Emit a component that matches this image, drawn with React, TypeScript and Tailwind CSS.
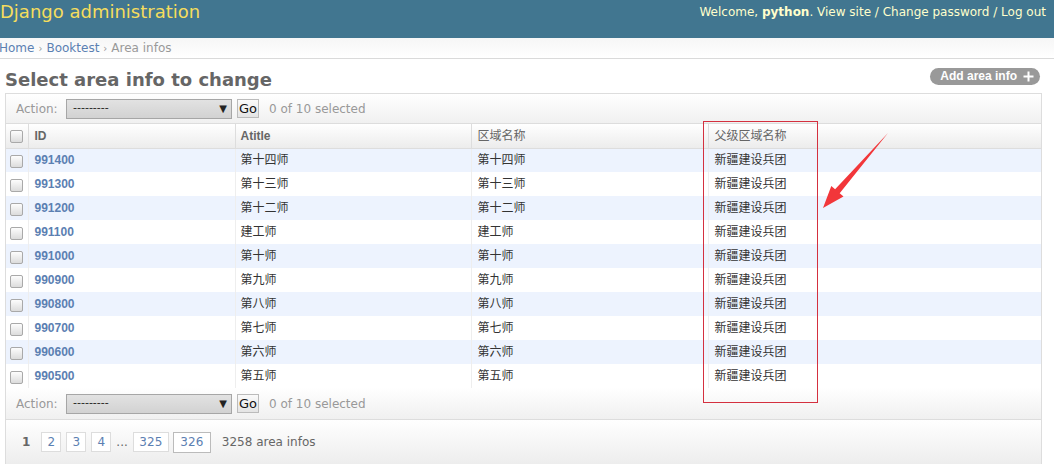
import React from 'react'

const ROWS = [
  ['991400', '第十四师', '第十四师'],
  ['991300', '第十三师', '第十三师'],
  ['991200', '第十二师', '第十二师'],
  ['991100', '建工师', '建工师'],
  ['991000', '第十师', '第十师'],
  ['990900', '第九师', '第九师'],
  ['990800', '第八师', '第八师'],
  ['990700', '第七师', '第七师'],
  ['990600', '第六师', '第六师'],
  ['990500', '第五师', '第五师'],
]

const dejavu = "font-['DejaVu_Sans','Noto_Sans_CJK_SC',sans-serif]"
const arial = "font-['Liberation_Sans','Noto_Sans_CJK_SC',sans-serif]"

function Checkbox() {
  return (
    <span className="inline-block w-[13px] h-[13px] rounded-[2px] border border-[#a9a9a9] bg-gradient-to-b from-[#fdfdfd] to-[#dcdcdc]" />
  )
}

function ActionBar({ top }: { top?: boolean }) {
  return (
    <div
      className={`flex items-center pl-[10px] text-[12px] text-[#999] bg-gradient-to-b from-[#ffffff] to-[#f0f0f0] border-b border-[#ddd] ${
        top ? 'h-[30px]' : 'h-[32px]'
      }`}
    >
      <span className="w-[50px]">Action:</span>
      <div className="flex items-center justify-between w-[166px] h-[20px] border border-[#a6a6a6] bg-gradient-to-b from-[#e2e2e2] to-[#d2d2d2] pl-[6px] pr-[4px] text-[#222] text-[11px]">
        <span>---------</span>
        <span className="text-[10px]">▼</span>
      </div>
      <div className="ml-[5px] h-[19px] w-[22px] flex items-center justify-center border border-[#bbb] bg-gradient-to-b from-[#fafafa] to-[#e4e4e4] text-[#111] text-[13px]">
        Go
      </div>
      <span className="ml-[10px]">0 of 10 selected</span>
    </div>
  )
}

export default function App() {
  return (
    <div className={`relative w-[1054px] h-[464px] overflow-hidden bg-white ${dejavu}`}>
      {/* Header */}
      <div className="flex items-center justify-between h-[38px] bg-[#417690] pr-[8px]">
        <div className="text-[18px] text-[#f5dd5d] leading-none -mt-[14px]">Django administration</div>
        <div className="text-[12px] text-[#ffffcc] -mt-[14px]">
          Welcome, <b>python</b>. View site / Change password / Log out
        </div>
      </div>

      {/* Breadcrumbs */}
      <div className="h-[21px] flex items-center text-[12px] text-[#999] bg-gradient-to-b from-[#f6f6f6] to-white border-b border-[#dadada] -ml-[1px]">
        <span className="text-[#5b80b2]">Home</span>
        <span className="mx-[4px] text-[10px]">›</span>
        <span className="text-[#5b80b2]">Booktest</span>
        <span className="mx-[4px] text-[10px]">›</span>
        <span>Area infos</span>
      </div>

      {/* Content */}
      <div className="pl-[5px] pr-[12px]">
        <div className="flex items-center justify-between h-[34px] pt-[6px]">
          <h1 className="text-[18px] font-bold text-[#666]">Select area info to change</h1>
          <div className={`flex items-center gap-[6px] h-[17px] rounded-full bg-[#999] pl-[10px] pr-[6px] mr-[2px] -mt-[6px] text-white text-[12px] font-bold ${arial}`}>
            Add area info
            <svg width="11" height="11" viewBox="0 0 11 11">
              <path d="M5.5 0.5v10M0.5 5.5h10" stroke="white" strokeWidth="2" />
            </svg>
          </div>
        </div>

        <div className="border border-[#ddd] border-b-0">
          <ActionBar top />

          <table className="w-full border-collapse text-[12px]">
            <thead>
              <tr className={`h-[24px] bg-gradient-to-b from-[#ffffff] to-[#ececec] text-[#666] font-bold ${arial}`}>
                <th className="w-[22px] text-center align-middle border-b border-[#ddd]">
                  <div className="flex justify-center pt-[2px]"><Checkbox /></div>
                </th>
                <th className="w-[207px] text-left pl-[6px] border-l border-b border-[#ddd]">ID</th>
                <th className="w-[236px] text-left pl-[5px] border-l border-b border-[#ddd]">Atitle</th>
                <th className="w-[237px] text-left pl-[6px] border-l border-b border-[#ddd] font-normal">区域名称</th>
                <th className="text-left pl-[6px] border-l border-b border-[#ddd] font-normal">父级区域名称</th>
              </tr>
            </thead>
            <tbody>
              {ROWS.map((r, i) => (
                <tr key={r[0]} className={`h-[24px] ${i % 2 === 0 ? 'bg-[#edf3fe]' : 'bg-white'}`}>
                  <td className="text-center">
                    <div className="flex justify-center pt-[2px]"><Checkbox /></div>
                  </td>
                  <td className={`pl-[6px] border-l border-[#eee] text-[#5b80b2] font-bold ${arial}`}>{r[0]}</td>
                  <td className="pl-[5px] border-l border-[#eee] text-[#333]">{r[1]}</td>
                  <td className="pl-[6px] border-l border-[#eee] text-[#333]">{r[2]}</td>
                  <td className="pl-[6px] border-l border-[#eee] text-[#333]">新疆建设兵团</td>
                </tr>
              ))}
            </tbody>
          </table>

          <ActionBar />

          {/* Pagination */}
          <div className="flex items-center h-[44px] pl-[16px] text-[12px] bg-gradient-to-b from-white to-[#ededed]">
            <span className="font-bold text-[#666]">1</span>
            {['2', '3', '4'].map((n, i) => (
              <span
                key={n}
                className={`${i === 0 ? 'ml-[11px]' : 'ml-[5px]'} w-[20px] h-[20px] flex items-center justify-center border border-[#ddd] text-[#5b80b2] bg-white`}
              >
                {n}
              </span>
            ))}
            <span className="ml-[5px] text-[#666]">...</span>
            <span className="ml-[5px] w-[36px] h-[20px] flex items-center justify-center border border-[#ddd] text-[#5b80b2] bg-white">325</span>
            <span className="ml-[4px] w-[38px] h-[21px] flex items-center justify-center border border-[#bbb] text-[#5b80b2] bg-white">326</span>
            <span className="ml-[11px] text-[#666]">3258 area infos</span>
          </div>
        </div>
      </div>

      {/* Annotation overlay */}
      <div className="absolute left-[703px] top-[121px] w-[115px] h-[282px] border border-[#d4303f]" />
      <svg className="absolute left-0 top-0" width="1054" height="464">
        <polygon
          points="888,133 839.7,193.3 843.5,196.5 823,208 831.3,186.1 835.1,189.3"
          fill="#f2363a"
        />
      </svg>
    </div>
  )
}
